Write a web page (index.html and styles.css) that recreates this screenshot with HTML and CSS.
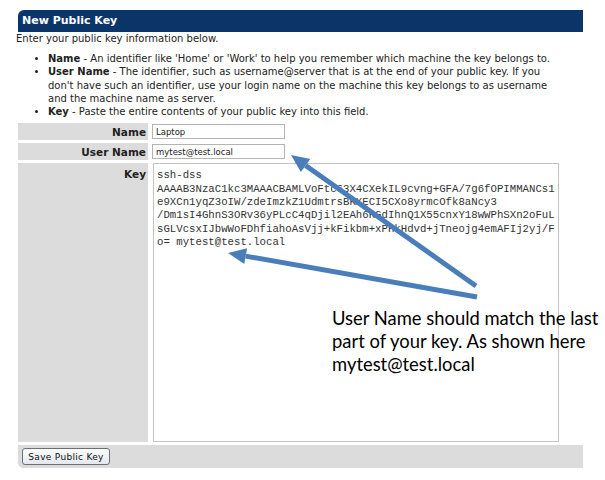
FILE: index.html
```html
<!DOCTYPE html>
<html lang="en">

<head>
  <meta charset="UTF-8">
  <title>New Public Key</title>
  <link rel="stylesheet" href="styles.css">
</head>

<body>
  <div class="panel">
    <h1 class="panel-title">New Public Key</h1>
    <p class="intro">Enter your public key information below.</p>

    <ul class="notes">
      <li><b>Name</b> - An identifier like 'Home' or 'Work' to help you remember which machine the key belongs to.</li>
      <li><b>User Name</b> - The identifier, such as username@server that is at the end of your public key. If you don't have such an identifier, use your login name on the machine this key belongs to as username and the machine name as server.</li>
      <li><b>Key</b> - Paste the entire contents of your public key into this field.</li>
    </ul>

    <form class="key-form">
      <label class="field-label" for="keyName">Name</label>
      <div class="field-value">
        <input type="text" id="keyName" class="text-input" value="Laptop">
      </div>

      <label class="field-label" for="keyUser">User Name</label>
      <div class="field-value">
        <input type="text" id="keyUser" class="text-input" value="mytest@test.local">
      </div>

      <label class="field-label field-label-top" for="keyBody">Key</label>
      <div class="field-value">
        <textarea id="keyBody" class="key-input" wrap="off" spellcheck="false">ssh-dss
AAAAB3NzaC1kc3MAAACBAMLVoFtc63X4CXekIL9cvng+GFA/7g6fOPIMMANCs1
e9XCn1yqZ3oIW/zdeImzkZ1UdmtrsBKXECI5CXo8yrmcOfk8aNcy3
/Dm1sI4GhnS3ORv36yPLcC4qDjil2EAh6RGdIhnQ1X55cnxY18wWPhSXn2oFuL
sGLVcsxIJbwWoFDhfiahoAsVjj+kFikbm+xPHkHdvd+jTneojg4emAFIj2yj/F
o= mytest@test.local</textarea>
      </div>

      <div class="form-actions">
        <button type="button" class="save-button">Save Public Key</button>
      </div>
    </form>
  </div>

  <!-- callout drawn over the form -->
  <svg class="callout-arrows" width="605" height="480" viewBox="0 0 605 480">
    <line x1="476" y1="286" x2="305.6" y2="165.5" />
    <polygon points="291,155 310.3,159 300.9,172" />
    <line x1="477" y1="297" x2="245.7" y2="256.1" />
    <polygon points="228,253 247.1,248.2 244.3,264" />
  </svg>
  <p class="callout-text">User Name should match the last<br>part of your key. As shown here<br>mytest@test.local</p>
</body>

</html>
```

FILE: styles.css
```css
body {
  font-family: "DejaVu Sans", Verdana, sans-serif;
  font-size: 10px;
  margin: 0;
  color: #222;
  background-color: #fff;
}

.panel {
  width: 565px;
  margin: 10px 0 0 18px;
}

.panel-title {
  height: 22px;
  margin: 0;
  padding-left: 4px;
  background-color: #0b3468;
  border-top-left-radius: 6px;
  color: #fff;
  font-size: 11px;
  font-weight: bold;
  line-height: 22px;
}

.intro {
  margin: 0 0 0 -2px;
  line-height: 13px;
}

.notes {
  margin: 7px 0 0;
  padding: 0 24px 0 30px;
  line-height: 13.3px;
}

.notes b {
  font-weight: bold;
}

.key-form {
  display: grid;
  grid-template-columns: 130px 1fr;
  column-gap: 4px;
  row-gap: 3px;
  margin-top: 5px;
}

.field-label {
  background-color: #dcdcdc;
  text-align: right;
  padding: 2px 2px 0 0;
  font-weight: bold;
  font-size: 10.5px;
  line-height: 14px;
  height: 15px;
}

.field-label-top {
  height: auto;
  padding-top: 4px;
}

.field-value {
  display: flex;
  align-items: flex-start;
}

.text-input {
  width: 133px;
  height: 15px;
  box-sizing: border-box;
  margin: 1px 0 0;
  padding: 0 3px;
  border: 1px solid #b4b4b4;
  font-family: "DejaVu Sans", Tahoma, sans-serif;
  font-size: 8.5px;
  color: #222;
}

.key-input {
  width: 406px;
  height: 279px;
  box-sizing: border-box;
  margin: 0 0 0 1px;
  padding: 5px 3px 4px;
  border: 1px solid #c4c4c4;
  font-family: "Liberation Mono", "Courier New", monospace;
  font-size: 10.7px;
  line-height: 13.3px;
  color: #333;
  resize: none;
  overflow: hidden;
}

.form-actions {
  grid-column: 1 / 3;
  height: 23px;
  padding: 3px 0 0 4px;
  box-sizing: border-box;
  background-color: #dcdcdc;
  border-bottom-left-radius: 5px;
}

.save-button {
  width: 88px;
  height: 17px;
  padding: 0;
  border: 1px solid #6b7078;
  border-radius: 3px;
  background: linear-gradient(#fdfdfd, #e4e8ee);
  font-family: "DejaVu Sans", Tahoma, sans-serif;
  font-size: 9px;
  letter-spacing: 0.3px;
  color: #111;
}

.callout-arrows {
  position: absolute;
  top: 0;
  left: 0;
  pointer-events: none;
}

.callout-arrows line {
  stroke: #4a7ebb;
  stroke-width: 5;
}

.callout-arrows polygon {
  fill: #4a7ebb;
}

.callout-text {
  position: absolute;
  top: 307px;
  left: 332px;
  margin: 0;
  font-family: Lato, "Open Sans", sans-serif;
  font-size: 18.4px;
  line-height: 23px;
  color: #000;
}
```
